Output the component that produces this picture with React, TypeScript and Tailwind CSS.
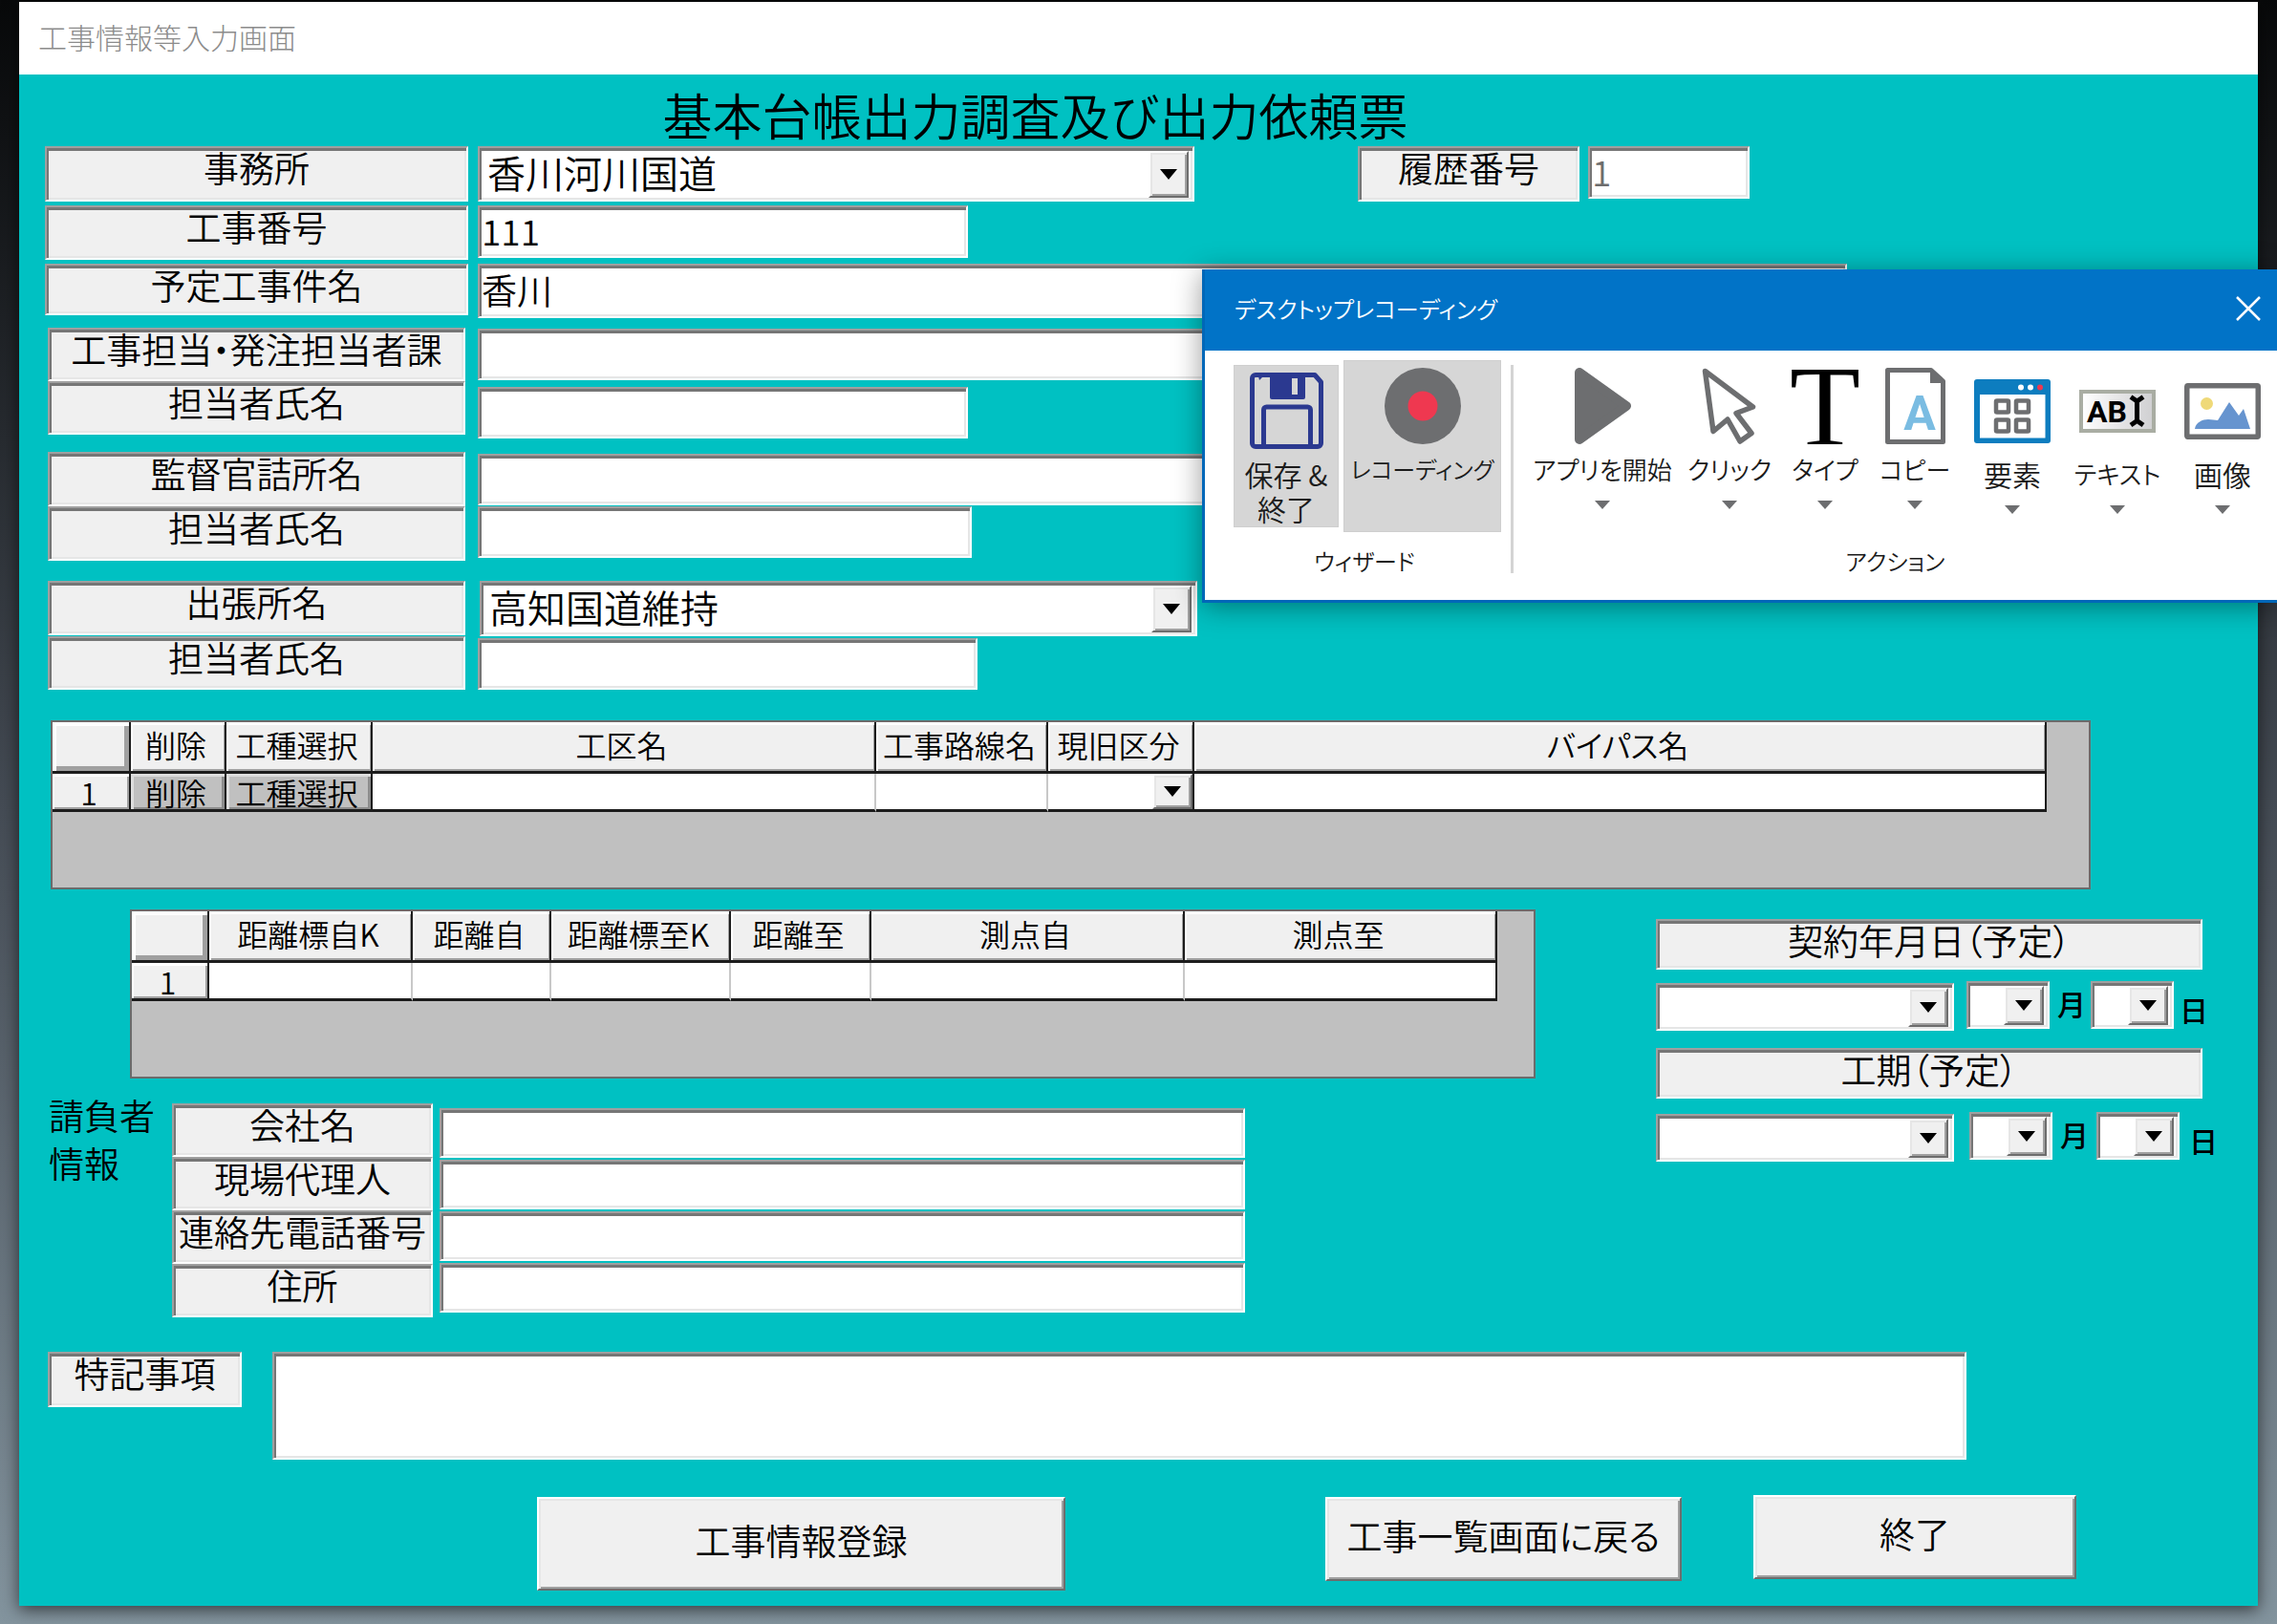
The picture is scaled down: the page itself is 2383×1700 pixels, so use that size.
import type { ReactNode } from "react";
import { clsx } from "clsx";

const SUNKEN =
  "rounded-none border-2 border-t-[#a0a0a0] border-l-[#a0a0a0] border-r-white border-b-white shadow-[inset_2px_3px_0_#767676,inset_-2px_-2px_0_#e6e6e6]";
const RAISED =
  "rounded-none border-2 border-t-white border-l-white border-r-[#6d6d6d] border-b-[#6d6d6d] bg-[#f0f0f0] shadow-[inset_2px_2px_0_#e6e6e6,inset_-2px_-2px_0_#a0a0a0]";

function Tag({ htmlFor, className, children }: { htmlFor: string; className?: string; children: ReactNode }) {
  return (
    <label
      htmlFor={htmlFor}
      className={clsx(SUNKEN, "block shrink-0 whitespace-nowrap bg-[#f0f0f0] text-center text-[37px] leading-[40px]", className)}
    >
      {children}
    </label>
  );
}

function Field({ id, value, className }: { id: string; value?: string; className?: string }) {
  return (
    <input
      id={id}
      type="text"
      defaultValue={value}
      className={clsx(SUNKEN, "block min-w-0 bg-white px-[2px] pb-1 text-[37px] leading-[44px] outline-none", className)}
    />
  );
}

function DropArrow({ className }: { className?: string }) {
  return (
    <span
      aria-hidden="true"
      className={clsx(RAISED, "pointer-events-none absolute flex w-[42px] items-center justify-center", className)}
    >
      <svg width="18" height="11" viewBox="0 0 18 11">
        <path d="M0 0h18L9 11z" fill="#000" />
      </svg>
    </span>
  );
}

function Combo({ id, value = "", label, className }: { id: string; value?: string; label?: string; className?: string }) {
  return (
    <div className={clsx("relative shrink-0", className)}>
      <select
        id={id}
        aria-label={label}
        defaultValue={value}
        className={clsx(SUNKEN, "block h-full w-full appearance-none bg-white pr-12 pb-1 pl-2 text-[40px] leading-[44px] outline-none")}
      >
        <option value={value}>{value}</option>
      </select>
      <DropArrow className="top-[5px] right-[6px] bottom-1" />
    </div>
  );
}

type Column = { name: string; width: string };

const WORK_COLUMNS: Column[] = [
  { name: "削除", width: "w-[100px]" },
  { name: "工種選択", width: "w-[153px]" },
  { name: "工区名", width: "w-[527px]" },
  { name: "工事路線名", width: "w-[180px]" },
  { name: "現旧区分", width: "w-[153px]" },
  { name: "バイパス名", width: "w-auto" },
];

const DISTANCE_COLUMNS: Column[] = [
  { name: "距離標自K", width: "w-[213px]" },
  { name: "距離自", width: "w-[145px]" },
  { name: "距離標至K", width: "w-[188px]" },
  { name: "距離至", width: "w-[147px]" },
  { name: "測点自", width: "w-[328px]" },
  { name: "測点至", width: "w-auto" },
];

function GridCell({ name, last }: { name: string; last: boolean }) {
  const line = last || name === "現旧区分" ? "border-r-[#1c1c1c]" : "border-r-[#c8c8c8]";
  const cell = "h-[40px] border-r-2 border-b-[3px] border-b-[#1c1c1c] p-0";
  if (name === "削除" || name === "工種選択") {
    return (
      <td className={clsx(cell, "border-r-[#1c1c1c] bg-[#c0c0c0]")}>
        <button
          type="button"
          className="block h-[37px] w-full whitespace-nowrap pr-1 text-center leading-[36px] shadow-[inset_3px_3px_0_#dedede,inset_-3px_-2px_0_#8c8c8c]"
        >
          {name}
        </button>
      </td>
    );
  }
  if (name === "現旧区分") {
    return (
      <td className={clsx(cell, line, "bg-white")}>
        <div className="relative h-[37px]">
          <select aria-label={name} className="block h-full w-full appearance-none bg-white outline-none">
            <option value="" />
          </select>
          <DropArrow className="top-0 right-0 bottom-0" />
        </div>
      </td>
    );
  }
  return (
    <td className={clsx(cell, line, "bg-white")}>
      <input type="text" aria-label={name} className="block h-[37px] w-full bg-white px-1 outline-none" />
    </td>
  );
}

function Sheet({ columns, firstWidth, className }: { columns: Column[]; firstWidth: string; className?: string }) {
  return (
    <div className={clsx("min-h-[177px] border-2 border-[#6b6b6b] bg-[#c0c0c0]", className)}>
      <table className="w-full table-fixed border-separate border-spacing-0 text-[32px] leading-[44px]">
        <thead>
          <tr>
            <th
              aria-label="行"
              className={clsx(
                "h-[54px] border-r-2 border-b-[3px] border-[#1c1c1c] bg-[#f0f0f0] p-0 shadow-[inset_4px_4px_0_#ffffff,inset_-5px_-5px_0_#a0a0a0]",
                firstWidth,
              )}
            />
            {columns.map((c) => (
              <th
                key={c.name}
                className={clsx(
                  "h-[54px] border-r-2 border-b-[3px] border-[#1c1c1c] bg-[#f0f0f0] pt-0 pr-1 pb-[5px] pl-0 font-[350] whitespace-nowrap shadow-[inset_2px_3px_0_#ffffff,inset_-1px_-2px_0_#a0a0a0]",
                  c.width,
                )}
              >
                {c.name}
              </th>
            ))}
          </tr>
        </thead>
        <tbody>
          <tr>
            <th className="h-[40px] border-r-2 border-b-[3px] border-[#1c1c1c] bg-[#f0f0f0] pt-0 pr-1 pb-0 pl-0 leading-[36px] font-[350] shadow-[inset_2px_3px_0_#ffffff,inset_-2px_-2px_0_#a0a0a0]">
              1
            </th>
            {columns.map((c, i) => (
              <GridCell key={c.name} name={c.name} last={i === columns.length - 1} />
            ))}
          </tr>
        </tbody>
      </table>
    </div>
  );
}

function DateRow({ prefix, label, className, wide }: { prefix: string; label: string; className?: string; wide?: boolean }) {
  return (
    <div className={clsx("flex h-[52px] text-[30px] font-medium", className)}>
      <Combo id={`${prefix}-year`} label={`${label} 年`} className="h-[50px] w-[312px] self-end" />
      <Combo id={`${prefix}-month`} label={`${label} 月`} className={clsx("h-[50px] w-[87px]", wide ? "ml-4" : "ml-[13px]")} />
      <span className="ml-2 w-[30px] text-center leading-[46px]">月</span>
      <Combo id={`${prefix}-day`} label={`${label} 日`} className={clsx("h-[50px] w-[87px]", wide ? "ml-2" : "ml-[5px]")} />
      <span className={clsx("w-[30px] self-end text-center leading-[46px]", wide ? "ml-[10px]" : "ml-[6px]")}>日</span>
    </div>
  );
}

function SaveIcon() {
  return (
    <svg width="77" height="80" viewBox="0 0 77 80" fill="none" stroke="#2b3990" strokeWidth="5">
      <path d="M6 2.500h62L74.500 10v64a3.500 3.500 0 0 1-3.500 3.500H6A3.500 3.500 0 0 1 2.500 74V6A3.500 3.500 0 0 1 6 2.500z" strokeLinejoin="round" />
      <path d="M21 1h37v25a2 2 0 0 1-2 2H23a2 2 0 0 1-2-2z" fill="#2b3990" stroke="none" />
      <path d="M44 6h6v17h-6z" fill="#d6d6d6" stroke="none" />
      <path d="M9 4h5l-4 4z" fill="#2b3990" stroke="none" />
      <path d="M14.500 76V39a3 3 0 0 1 3-3h43a3 3 0 0 1 3 3v37" />
    </svg>
  );
}

function RecordIcon() {
  return (
    <svg width="80" height="80" viewBox="0 0 80 80">
      <circle cx="40" cy="40" r="40" fill="#6d6e70" />
      <circle cx="40" cy="40" r="15.500" fill="#ef3850" />
    </svg>
  );
}

function PlayIcon() {
  return (
    <svg width="59" height="80" viewBox="0 0 59 80">
      <path d="M5 5v70L54 40z" fill="#6d6e70" stroke="#6d6e70" strokeWidth="10" strokeLinejoin="round" />
    </svg>
  );
}

function PointerIcon() {
  return (
    <svg width="58" height="80" viewBox="0 0 58 80">
      <path d="M3.500 3.500L53.500 41L36 47.500L52 68.500L40 77L27 54L12 66.500z" fill="#fff" stroke="#6d6e70" strokeWidth="5.500" strokeLinejoin="round" />
    </svg>
  );
}

function TypeIcon() {
  return (
    <span aria-hidden="true" className="block h-[80px] overflow-hidden font-['Liberation_Serif',serif] text-[121px] leading-[80px] text-black">
      T
    </span>
  );
}

function CopyIcon() {
  return (
    <svg width="63" height="80" viewBox="0 0 63 80">
      <path d="M2.500 2.500H48L60.500 14v63.500h-58z" fill="#fff" stroke="#6d6e70" strokeWidth="5" strokeLinejoin="round" />
      <path d="M47 1l15 14v1H47z" fill="#6d6e70" />
      <text x="36" y="65" textAnchor="middle" fontFamily="Roboto, sans-serif" fontWeight="700" fontSize="50" fill="#7abce2">
        A
      </text>
    </svg>
  );
}

function ElementIcon() {
  return (
    <svg width="80" height="67" viewBox="0 0 80 67">
      <rect width="80" height="67" rx="3" fill="#0d7dbf" />
      <path d="M6 16h68.500v45.500H6z" fill="#fff" />
      <circle cx="49" cy="8.500" r="3" fill="#fff" />
      <circle cx="59" cy="8.500" r="3" fill="#fff" />
      <circle cx="69" cy="8.500" r="3" fill="#ef3850" />
      <g fill="none" stroke="#6d6e70" strokeWidth="4.500">
        <rect x="23" y="22.500" width="13" height="12" rx="1" />
        <rect x="44" y="22.500" width="13" height="12" rx="1" />
        <rect x="23" y="42.500" width="13" height="12" rx="1" />
        <rect x="44" y="42.500" width="13" height="12" rx="1" />
      </g>
    </svg>
  );
}

function TextIcon() {
  return (
    <svg width="80" height="45" viewBox="0 0 80 45">
      <defs>
        <linearGradient id="text-icon-fill" x1="0" x2="1" y1="0" y2="0">
          <stop offset="0" stopColor="#fff" />
          <stop offset="1" stopColor="#cfcfd1" />
        </linearGradient>
      </defs>
      <rect x="2" y="2" width="76" height="41" fill="url(#text-icon-fill)" stroke="#a9ada3" strokeWidth="4" />
      <text x="29" y="34" textAnchor="middle" fontFamily="Roboto, sans-serif" fontWeight="700" fontSize="32" fill="#000">
        AB
      </text>
      <path d="M54 7.500l6.500 4.500L67 7.500M54 37l6.500-4.500L67 37M60.500 12v21" fill="none" stroke="#000" strokeWidth="5" />
    </svg>
  );
}

function ImageIcon() {
  return (
    <svg width="80" height="59" viewBox="0 0 80 59">
      <rect x="2.750" y="2.750" width="74.500" height="53.500" rx="1" fill="#fff" stroke="#6d6e70" strokeWidth="5.500" />
      <circle cx="23.500" cy="21.500" r="6.500" fill="#efd978" />
      <path d="M11 48c1-7 8-10 14-10 4 0 7 1 10 1l12-19 10 14 5-7 7 21z" fill="#6694cf" />
    </svg>
  );
}

const ACTIONS: { name: string; width: string; icon: ReactNode; size: string; low?: boolean }[] = [
  { name: "アプリを開始", width: "w-[148px]", icon: <PlayIcon />, size: "text-[26px]" },
  { name: "クリック", width: "w-[118px]", icon: <PointerIcon />, size: "text-[26px]" },
  { name: "タイプ", width: "w-[82px]", icon: <TypeIcon />, size: "text-[26px]" },
  { name: "コピー", width: "w-[106px]", icon: <CopyIcon />, size: "text-[26px]" },
  { name: "要素", width: "w-[98px]", icon: <ElementIcon />, size: "text-[30px]", low: true },
  { name: "テキスト", width: "w-[122px]", icon: <TextIcon />, size: "text-[26px]", low: true },
  { name: "画像", width: "w-[98px]", icon: <ImageIcon />, size: "text-[30px]", low: true },
];

function RecorderDialog() {
  return (
    <section
      role="dialog"
      aria-label="デスクトップレコーディング"
      className="absolute top-[282px] right-0 flex w-[1125px] flex-col border-b-[3px] border-l-[3px] border-[#0067b8] bg-white text-[24px] leading-[36px] font-[350] text-[#1b1b1b] shadow-[0_4px_28px_rgba(0,0,0,0.4)]"
    >
      <header className="flex h-[85px] items-center justify-between bg-[#0173c7] pr-[17px] pb-1 pl-[31px] text-white">
        <h2>デスクトップレコーディング</h2>
        <button type="button" aria-label="閉じる">
          <svg width="26" height="26" viewBox="0 0 26 26">
            <path d="M1 1l24 24M25 1L1 25" stroke="#fff" strokeWidth="2.500" />
          </svg>
        </button>
      </header>
      <div className="flex h-[261px] pt-[10px]">
        <div className="flex w-[320px] shrink-0 flex-col pl-[30px]">
          <div className="flex h-[180px] items-center gap-[5px]">
            <button type="button" className="flex h-[170px] w-[110px] flex-col items-center border border-[#cfcfcf] bg-[#d6d6d6] pt-[7px] text-[30px] whitespace-nowrap">
              <SaveIcon />
              <span className="mt-2">保存 &amp;</span>
              <span>終了</span>
            </button>
            <button type="button" className="flex h-[180px] w-[165px] flex-col items-center border border-[#cfcfcf] bg-[#d6d6d6] pt-[7px] whitespace-nowrap">
              <RecordIcon />
              <span className="mt-2">レコーディング</span>
            </button>
          </div>
          <p className="mt-3 pr-4 text-center">ウィザード</p>
        </div>
        <div className="mt-[5px] h-[218px] w-[3px] shrink-0 bg-[#d4d4d4]" />
        <div className="flex min-w-0 flex-1 flex-col">
          <div className="flex h-[180px] pl-[19px]">
            {ACTIONS.map((a) => (
              <button
                key={a.name}
                type="button"
                className={clsx("flex shrink-0 flex-col items-center whitespace-nowrap", a.width, a.low ? "pt-[13px]" : "pt-[8px]")}
              >
                <span className="flex h-[80px] items-center justify-center">{a.icon}</span>
                <span className={clsx("mt-2 leading-[36px]", a.size)}>{a.name}</span>
                <svg width="16" height="9" viewBox="0 0 16 9" className="mt-[15px]">
                  <path d="M0 0h16L8 9z" fill="#6d6e70" />
                </svg>
              </button>
            ))}
          </div>
          <p className="mt-3 text-center">アクション</p>
        </div>
      </div>
    </section>
  );
}

export default function App() {
  return (
    <div className="relative flex min-h-screen flex-col overflow-hidden bg-linear-to-b from-[#08090a] via-[#454c55] via-50% to-[#83949e] px-5 pt-[2px] pb-[19px] font-['Noto_Sans_CJK_JP',sans-serif] font-[350] text-black [font-feature-settings:'palt']">
      <main className="flex flex-1 flex-col bg-[#00c1c2] shadow-[0_4px_16px_rgba(0,0,0,0.6)]">
        <header className="flex h-[76px] shrink-0 items-center bg-white pb-[5px] pl-5">
          <span className="text-[30px] leading-[40px] font-light text-[#8c8c8c] [font-feature-settings:normal]">工事情報等入力画面</span>
        </header>

        <form className="flex flex-1 flex-col pl-[27px]" onSubmit={(e) => e.preventDefault()}>
          <h1 className="mt-[12px] pr-[243px] text-center text-[52px] leading-[60px] [font-feature-settings:normal]">
            基本台帳出力調査及び出力依頼票
          </h1>

          <div className="mt-[3px] flex flex-col gap-1">
            <div className="flex">
              <Tag htmlFor="office" className="h-[58px] w-[443px]">事務所</Tag>
              <Combo id="office" value="香川河川国道" className="ml-[10px] h-[58px] w-[750px]" />
              <Tag htmlFor="history" className="ml-[171px] h-[58px] w-[232px]">履歴番号</Tag>
              <Field id="history" value="1" className="ml-[9px] h-[55px] w-[169px] text-[#6d6d6d]" />
            </div>
            <div className="flex">
              <Tag htmlFor="work-no" className="h-[57px] w-[443px]">工事番号</Tag>
              <Field id="work-no" value="111" className="ml-[10px] h-[55px] w-[513px]" />
            </div>
            <div className="flex">
              <Tag htmlFor="work-name" className="h-[54px] w-[443px]">予定工事件名</Tag>
              <Field id="work-name" value="香川" className="mr-[430px] ml-[10px] h-[57px] flex-1" />
            </div>
          </div>

          <div className="mt-[10px] ml-[3px] flex flex-col">
            <div className="flex items-center">
              <Tag htmlFor="section" className="h-[56px] w-[437px]">工事担当・発注担当者課</Tag>
              <Field id="section" className="mr-[430px] ml-[13px] h-[54px] flex-1" />
            </div>
            <div className="flex items-end">
              <Tag htmlFor="section-person" className="mb-[4px] h-[56px] w-[437px]">担当者氏名</Tag>
              <Field id="section-person" className="ml-[13px] h-[54px] w-[513px]" />
            </div>
          </div>

          <div className="mt-[14px] ml-[3px] flex flex-col">
            <div className="flex items-center">
              <Tag htmlFor="supervisor" className="h-[57px] w-[437px]">監督官詰所名</Tag>
              <Field id="supervisor" className="mr-[430px] ml-[13px] h-[54px] flex-1" />
            </div>
            <div className="flex items-start">
              <Tag htmlFor="supervisor-person" className="h-[57px] w-[437px]">担当者氏名</Tag>
              <Field id="supervisor-person" className="ml-[13px] h-[54px] w-[517px]" />
            </div>
          </div>

          <div className="mt-[21px] ml-[3px] flex flex-col">
            <div className="flex">
              <Tag htmlFor="branch" className="h-[57px] w-[437px]">出張所名</Tag>
              <Combo id="branch" value="高知国道維持" className="ml-[15px] h-[58px] w-[751px]" />
            </div>
            <div className="flex items-end">
              <Tag htmlFor="branch-person" className="h-[56px] w-[437px]">担当者氏名</Tag>
              <Field id="branch-person" className="ml-[13px] h-[54px] w-[523px]" />
            </div>
          </div>

          <Sheet columns={WORK_COLUMNS} firstWidth="w-[82px]" className="mt-[32px] mr-[175px] ml-[6px] pr-[44px]" />

          <div className="mt-[21px] flex">
            <div className="flex w-[1560px] flex-col">
              <Sheet columns={DISTANCE_COLUMNS} firstWidth="w-[81px]" className="ml-[89px] pr-[38px]" />

              <div className="mt-[13px] flex">
                <p className="ml-1 w-[129px] shrink-0 text-[37px] leading-[50px]">
                  請負者
                  <br />
                  情報
                </p>
                <div className="flex shrink-0 flex-col pt-[13px]">
                  <Tag htmlFor="company" className="h-14 w-[273px]">会社名</Tag>
                  <Tag htmlFor="agent" className="h-14 w-[273px]">現場代理人</Tag>
                  <Tag htmlFor="phone" className="h-14 w-[273px]">連絡先電話番号</Tag>
                  <Tag htmlFor="address" className="h-14 w-[273px]">住所</Tag>
                </div>
                <div className="ml-[7px] flex w-[843px] flex-col gap-[2px] pt-[18px]">
                  <Field id="company" className="h-[52px] w-full" />
                  <Field id="agent" className="h-[52px] w-full" />
                  <Field id="phone" className="h-[52px] w-full" />
                  <Field id="address" className="h-[52px] w-full" />
                </div>
              </div>
            </div>

            <div className="mt-[10px] ml-[126px] flex w-[590px] shrink-0 flex-col">
              <Tag htmlFor="contract-year" className="h-[53px] w-[572px]">契約年月日（予定）</Tag>
              <DateRow prefix="contract" label="契約年月日" className="mt-3" />
              <Tag htmlFor="period-year" className="mt-[18px] h-[53px] w-[572px]">工期（予定）</Tag>
              <DateRow prefix="period" label="工期" className="mt-[14px]" wide />
            </div>
          </div>

          <div className="mt-[36px] flex items-start pl-[3px]">
            <Tag htmlFor="notes" className="h-[58px] w-[203px]">特記事項</Tag>
            <textarea
              id="notes"
              className={clsx(SUNKEN, "mr-[305px] ml-8 h-[113px] flex-1 resize-none bg-white p-2 text-[37px] leading-[44px] outline-none")}
            />
          </div>

          <div className="mt-[37px] flex items-start pl-[515px] text-[37px] leading-[44px]">
            <button type="button" className={clsx(RAISED, "mt-[2px] h-[98px] w-[553px] pb-2")}>工事情報登録</button>
            <button type="button" className={clsx(RAISED, "mt-[2px] ml-[272px] h-[88px] w-[373px] pb-2 whitespace-nowrap")}>工事一覧画面に戻る</button>
            <button type="button" className={clsx(RAISED, "ml-[75px] h-[88px] w-[338px] pb-2")}>終了</button>
          </div>
        </form>
      </main>
      <RecorderDialog />
    </div>
  );
}
